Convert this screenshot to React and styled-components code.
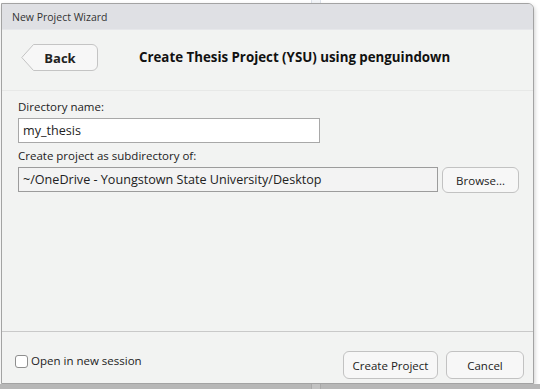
import React from "react";
import styled, { createGlobalStyle } from "styled-components";

const GlobalStyle = createGlobalStyle`
  html, body {
    margin: 0;
    padding: 0;
    background: #ffffff;
    font-family: "Open Sans", "Noto Sans", sans-serif;
    color: #1a1a1a;
  }
`;

const Page = styled.div`
  width: 540px;
  height: 389px;
  display: flex;
  flex-direction: column;
  overflow: hidden;
  background: #ffffff;
`;

const Strip = styled.div`
  height: ${(p) => p.h}px;
  flex: none;
  background: ${(p) => p.bg};
  display: flex;
  padding-left: 311px;
`;

const Divider = styled.div`
  width: 8px;
  border-left: 1px solid ${(p) => p.line};
  border-right: 1px solid ${(p) => p.line};
  background: ${(p) => p.fill};
`;

const Window = styled.div`
  margin-left: 1px;
  width: 531px;
  height: 379px;
  flex: none;
  border: 1px solid #a3a3a3;
  border-top-right-radius: 6px;
  background: #f2f3f2;
  display: flex;
  flex-direction: column;
  overflow: hidden;
  box-shadow: 1px 2px 4px rgba(0, 0, 0, 0.18);
`;

const TitleBar = styled.div`
  height: 25px;
  flex: none;
  background: #dfe0e4;
  border-bottom: 1px solid #e6e7ea;
  display: flex;
  align-items: center;
  padding-left: 10px;
  font-size: 10.5px;
  color: #333;
`;

const Header = styled.div`
  height: 46px;
  flex: none;
  display: flex;
  align-items: flex-start;
  padding: 14px 0 0 19px;
  border-bottom: 1px solid #e7e8e7;
`;

const BackButton = styled.div`
  position: relative;
  width: 77px;
  height: 27px;
  display: flex;
  align-items: center;
  justify-content: center;
  padding-left: 1px;
  box-sizing: border-box;
  font-size: 13px;
  font-weight: 700;
  color: #222;
  svg {
    position: absolute;
    left: 0;
    top: 0;
  }
  span {
    position: relative;
  }
`;

const HeaderTitle = styled.div`
  margin-left: 41px;
  line-height: 27px;
  font-size: 13.3px;
  font-weight: 700;
  color: #111;
`;

const Main = styled.div`
  flex: 1;
  padding: 8px 14px 0 16px;
  display: flex;
  flex-direction: column;
`;

const Label = styled.div`
  font-size: 11.5px;
  line-height: 16px;
  color: #222;
  margin-top: ${(p) => p.mt || 0}px;
  margin-bottom: 3px;
`;

const Row = styled.div`
  display: flex;
  gap: 4px;
`;

const Field = styled.div`
  width: ${(p) => p.w}px;
  height: 25px;
  box-sizing: border-box;
  border: 1px solid ${(p) => (p.readOnly ? "#9c9c9c" : "#a8a8a8")};
  background: ${(p) => (p.readOnly ? "#f3f3f3" : "#ffffff")};
  display: flex;
  align-items: center;
  padding-left: 4px;
  font-size: 12.6px;
  color: #222;
  white-space: nowrap;
  overflow: hidden;
`;

const Button = styled.div`
  width: ${(p) => p.w}px;
  height: ${(p) => p.h || 28}px;
  box-sizing: border-box;
  border: 1px solid #c2c2c2;
  border-radius: 6px;
  background: #f7f7f7;
  display: flex;
  align-items: center;
  justify-content: center;
  font-size: 11.5px;
  color: #222;
`;

const Footer = styled.div`
  height: 52px;
  box-sizing: border-box;
  flex: none;
  border-top: 1px solid #c9c9c9;
  display: flex;
  align-items: flex-start;
  padding: 19px 9px 0 13px;
`;

const Check = styled.label`
  display: flex;
  align-items: center;
  gap: 3px;
  height: 16px;
  line-height: 16px;
  font-size: 11.5px;
  color: #222;
  margin-top: 2px;
`;

const Box = styled.span`
  width: 13px;
  height: 13px;
  box-sizing: border-box;
  border: 1px solid #8e8e8e;
  border-radius: 3px;
  background: #fff;
`;

const Actions = styled.div`
  margin-left: auto;
  display: flex;
  gap: 8px;
`;

export default function App() {
  return (
    <Page>
      <GlobalStyle />
      <Strip h={3} bg="#ffffff">
        <Divider line="#dde2ea" fill="#f4f6f9" />
      </Strip>
      <Window>
        <TitleBar>New Project Wizard</TitleBar>
        <Header>
          <BackButton>
            <svg width="77" height="27" viewBox="0 0 77 27">
              <path
                d="M12.5 0.5 H71 A5.5 5.5 0 0 1 76.5 6 V21 A5.5 5.5 0 0 1 71 26.5 H12.5 L0.8 13.5 Z"
                fill="#f7f7f7"
                stroke="#c4c4c4"
              />
            </svg>
            <span>Back</span>
          </BackButton>
          <HeaderTitle>Create Thesis Project (YSU) using penguindown</HeaderTitle>
        </Header>
        <Main>
          <Label>Directory name:</Label>
          <Field w={302}>my_thesis</Field>
          <Label mt={5}>Create project as subdirectory of:</Label>
          <Row>
            <Field w={421} readOnly>
              ~/OneDrive - Youngstown State University/Desktop
            </Field>
            <Button w={77} h={26}>
              Browse...
            </Button>
          </Row>
        </Main>
        <Footer>
          <Check>
            <Box />
            Open in new session
          </Check>
          <Actions>
            <Button w={95}>Create Project</Button>
            <Button w={78}>Cancel</Button>
          </Actions>
        </Footer>
      </Window>
      <Strip h={6} bg="#b7b7b7">
        <Divider line="#a9a9a9" fill="#c2c2c2" />
      </Strip>
    </Page>
  );
}
